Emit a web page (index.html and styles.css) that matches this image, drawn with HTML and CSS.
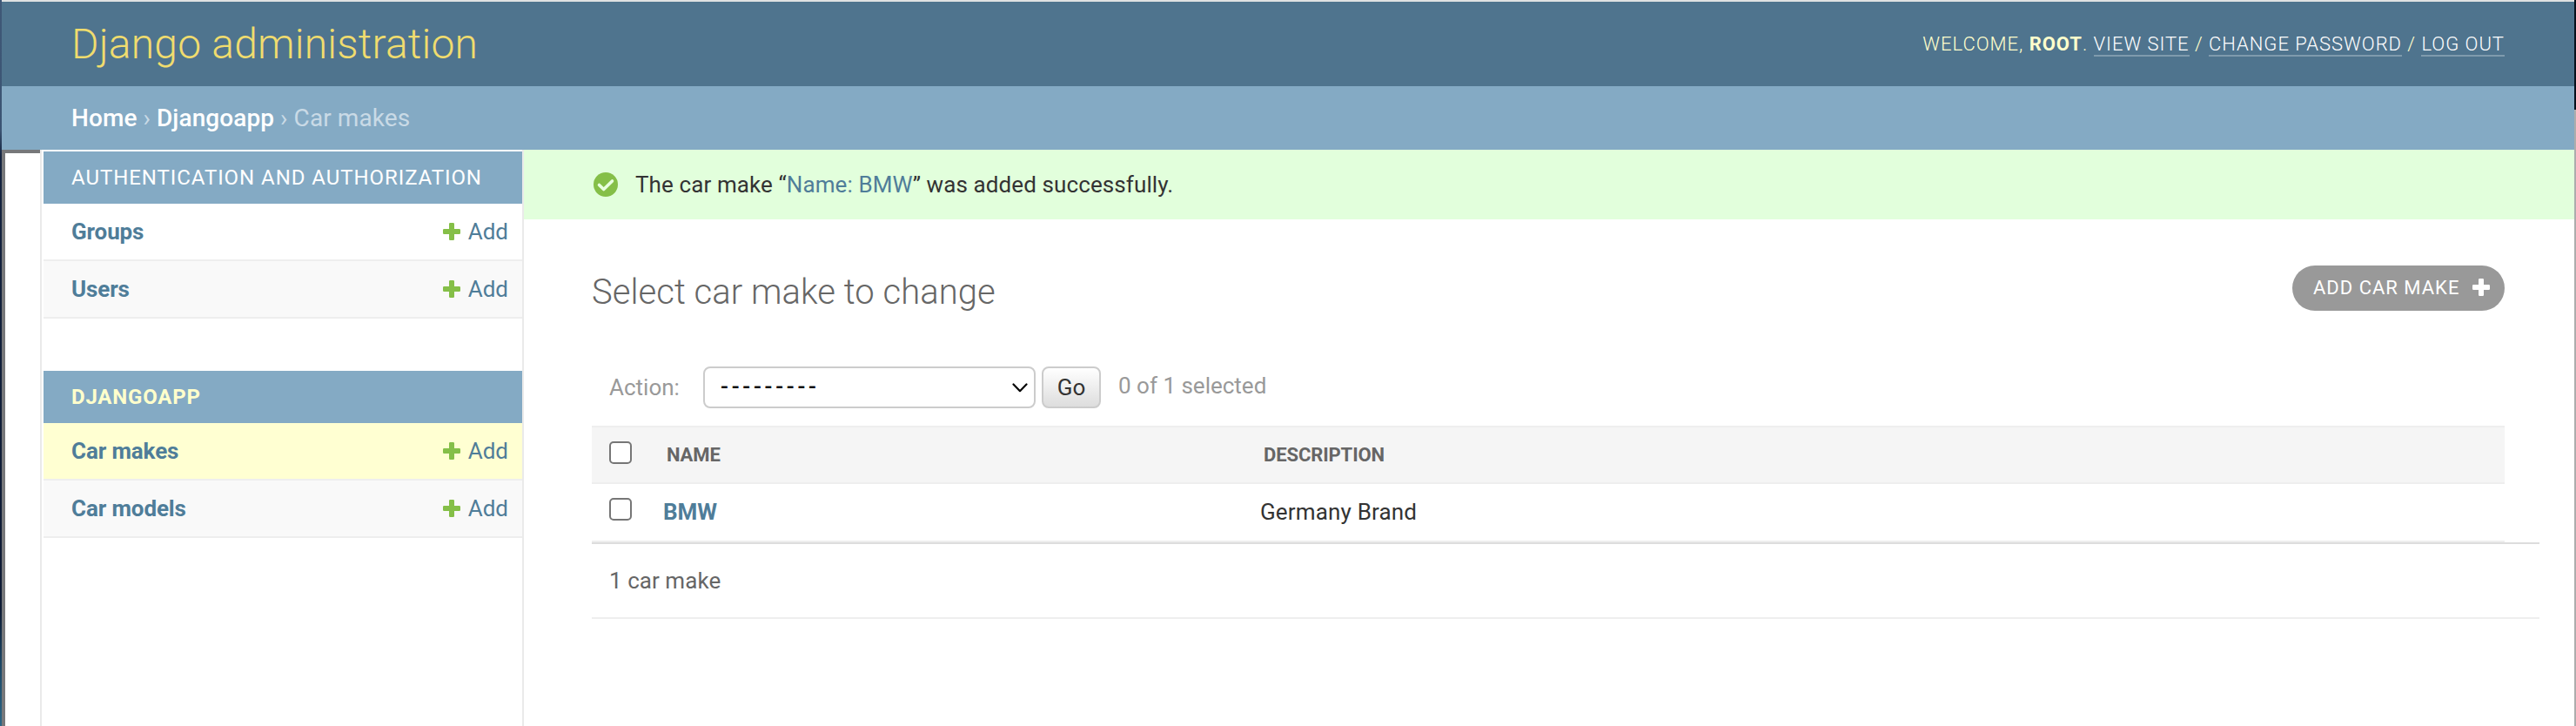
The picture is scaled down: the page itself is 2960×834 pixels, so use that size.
FILE: index.html
```html
<!DOCTYPE html>
<html lang="en">
<head>
<meta charset="utf-8">
<title>Select car make to change | Django site admin</title>
<link rel="stylesheet" href="styles.css">
</head>
<body>
<svg class="defs" width="0" height="0" aria-hidden="true">
  <symbol id="plus" viewBox="0 0 20 20"><path d="M8.3 0h3.4q1.3 0 1.3 1.3V7h5.700q1.300 0 1.300 1.300v3.400q0 1.300-1.300 1.300H13v5.700q0 1.300-1.300 1.300H8.300q-1.300 0-1.300-1.300V13H1.300Q0 13 0 11.700V8.300Q0 7 1.300 7H7V1.300Q7 0 8.300 0z"/></symbol>
</svg>
<div class="window">
  <header class="header">
    <h1 class="branding">Django administration</h1>
    <div class="user-tools">Welcome, <strong>root</strong>. <a>View site</a> / <a>Change password</a> / <a>Log out</a></div>
  </header>
  <nav class="breadcrumbs"><a>Home</a> › <a>Djangoapp</a> › Car makes</nav>
  <div class="main">
    <div class="gutter"></div>
    <aside class="sidebar">
      <section class="module">
        <h2 class="caption">Authentication and Authorization</h2>
        <div class="row"><a class="model">Groups</a><a class="add"><svg class="plus"><use href="#plus"/></svg>Add</a></div>
        <div class="row alt"><a class="model">Users</a><a class="add"><svg class="plus"><use href="#plus"/></svg>Add</a></div>
      </section>
      <section class="module">
        <h2 class="caption current">Djangoapp</h2>
        <div class="row selected"><a class="model">Car makes</a><a class="add"><svg class="plus"><use href="#plus"/></svg>Add</a></div>
        <div class="row alt"><a class="model">Car models</a><a class="add"><svg class="plus"><use href="#plus"/></svg>Add</a></div>
      </section>
    </aside>
    <main class="content">
      <div class="message">
        <svg class="tick" viewBox="0 0 28 28"><circle cx="14" cy="14" r="14"/><path d="M6.500 14.500l5.200 5L21.500 10"/></svg>
        <span>The car make “<a>Name: BMW</a>” was added successfully.</span>
      </div>
      <div class="title-row">
        <h1 class="title">Select car make to change</h1>
        <a class="add-button">Add car make<svg class="plus"><use href="#plus"/></svg></a>
      </div>
      <div class="actions">
        <span class="label">Action:</span>
        <div class="select"><span class="dashes">---------</span><svg class="chevron" viewBox="0 0 18 11"><path d="M1.500 1.500L9 9.200l7.500-7.700"/></svg></div>
        <button class="go">Go</button>
        <span class="counter">0 of 1 selected</span>
      </div>
      <div class="table">
        <div class="tr th"><span class="check"></span><span class="name">Name</span><span class="desc">Description</span></div>
        <div class="tr"><span class="check"></span><a class="name">BMW</a><span class="desc">Germany Brand</span></div>
      </div>
      <div class="paginator">1 car make</div>
    </main>
  </div>
</div>
</body>
</html>
```
FILE: styles.css
```css
* { box-sizing: border-box; }
html, body { margin: 0; height: 834px; overflow: hidden; }
body {
  display: flex;
  padding: 0 2px;
  background:
    linear-gradient(#3f5877 0, #3b5473 150px, #14233f 180px, #0d1a33 700px, #1c4563 760px, #2c6685 834px) 0 0 / 2px 834px no-repeat,
    linear-gradient(#06101c 0 126px, #adadad 126px) 2958px 0 / 2px 834px no-repeat;
  color: #333;
  font: 26px/32px Roboto, "Liberation Sans", sans-serif;
}
.defs { position: absolute; }
h1, h2 { margin: 0; font: inherit; }
.window { flex: 1; display: flex; flex-direction: column; background: #fff; border-top: 2px solid #dfe2e2; }
.header {
  display: flex; justify-content: space-between; height: 97px; flex: none;
  padding: 0 80px 0 80px; background: #4f748e; color: #ffffcc;
}
.branding { padding-top: 21px; font-size: 48px; line-height: 56px; font-weight: 300; letter-spacing: .2px; color: #f0dc6e; }
.user-tools { padding-top: 36px; font-size: 22px; line-height: 26px; font-weight: 300; letter-spacing: .98px; text-transform: uppercase; }
.user-tools strong { font-weight: 700; }
.user-tools a { color: #fff; border-bottom: 2px solid #7f9bad; }
.breadcrumbs {
  flex: none; height: 73px; padding: 21px 80px 0; background: #84aac4;
  color: #c9dae6; font-size: 28px; line-height: 32px; letter-spacing: .08px;
}
.breadcrumbs a { color: #fff; font-weight: 500; }
.main { flex: 1; display: flex; }
.gutter { width: 44px; border-left: 4px solid #77787a; border-top: 4px solid #77787a; }
.sidebar { width: 556px; padding: 2px 0 0 2px; border: solid #eaeaea; border-width: 0 2px; }
.module { margin-bottom: 60px; }
.caption {
  height: 60px; padding: 14px 32px; background: #84aac4; color: #fff;
  font-size: 24px; letter-spacing: .94px; text-transform: uppercase; white-space: nowrap;
}
.caption.current { color: #ffffcc; font-weight: 700; letter-spacing: .8px; }
.row {
  display: flex; justify-content: space-between; height: 66px; padding: 16px 16px 0 32px;
  border-bottom: 2px solid #eee; color: #4f7d99;
}
.row.alt { background: #f9f9f9; }
.row.selected { background: #ffffd2; }
.model { font-weight: 700; letter-spacing: -.12px; }
.add { display: flex; }
.add .plus { width: 20px; height: 20px; margin: 6px 9px 0 0; fill: #85bf48; }
.content { flex: 1; }
.message { display: flex; height: 80px; padding: 24px 0 0 80px; background: #e2ffdc; letter-spacing: .1px; }
.message a { color: #4f7d99; }
.tick { width: 28px; height: 28px; margin: 2px 20px 0 0; fill: #85bf48; }
.tick path { fill: none; stroke: #e8ffe0; stroke-width: 3.600; stroke-linecap: round; stroke-linejoin: round; }
.title-row { display: flex; justify-content: space-between; height: 169px; padding: 53px 80px 0 78px; }
.title { padding-top: 7px; font-size: 40px; line-height: 48px; font-weight: 300; letter-spacing: .04px; color: #666; }
.add-button {
  display: flex; width: 244px; height: 52px; padding: 13px 0 0 24px; border-radius: 26px;
  background: #999; color: #fff; font-size: 22px; line-height: 26px; letter-spacing: 1px;
  text-transform: uppercase; white-space: nowrap;
}
.add-button .plus { width: 20px; height: 20px; margin: 2px 17px 0 auto; fill: #fff; }
.actions { display: flex; height: 68px; padding-left: 98px; color: #999; }
.label { width: 108px; padding-top: 8px; }
.select {
  display: flex; justify-content: space-between; width: 382px; height: 48px; margin-right: 7px; padding: 0 7px 0 18px;
  border: 2px solid #ccc; border-radius: 8px; color: #000;
}
.dashes { font-size: 26px; line-height: 42px; font-weight: 500; letter-spacing: 3.800px; }
.chevron { width: 18px; height: 11px; margin-top: 17px; fill: none; stroke: #000; stroke-width: 2.200; stroke-linecap: round; stroke-linejoin: round; }
.go {
  width: 68px; height: 48px; padding: 0; border: 2px solid #ccc; border-radius: 8px;
  background: linear-gradient(#fff, #ddd); color: #333; font: inherit;
}
.counter { padding: 6px 0 0 20px; }
.table { margin: 0 80px 0 78px; border-top: 2px solid #eee; }
.tr { display: flex; height: 67px; padding: 16px 0 0 20px; border-bottom: 2px solid #eee; }
.th { height: 65px; background: #f5f5f5; color: #666; font-size: 22px; font-weight: 700; letter-spacing: -.1px; text-transform: uppercase; }
.check { width: 26px; height: 26px; margin-right: 36px; border: 2px solid #767676; border-radius: 5px; background: #fff; }
.name { width: 686px; font-weight: 700; color: #4f7d99; }
.desc { letter-spacing: .16px; }
.th .name { padding-left: 4px; color: #666; }
.th .desc { padding-left: 4px; letter-spacing: -.1px; }
.paginator { height: 88px; margin: 0 40px 0 78px; padding: 26px 20px; border: solid; border-width: 2px 0; border-color: #ddd transparent #eee; color: #666; letter-spacing: .05px; }
```
